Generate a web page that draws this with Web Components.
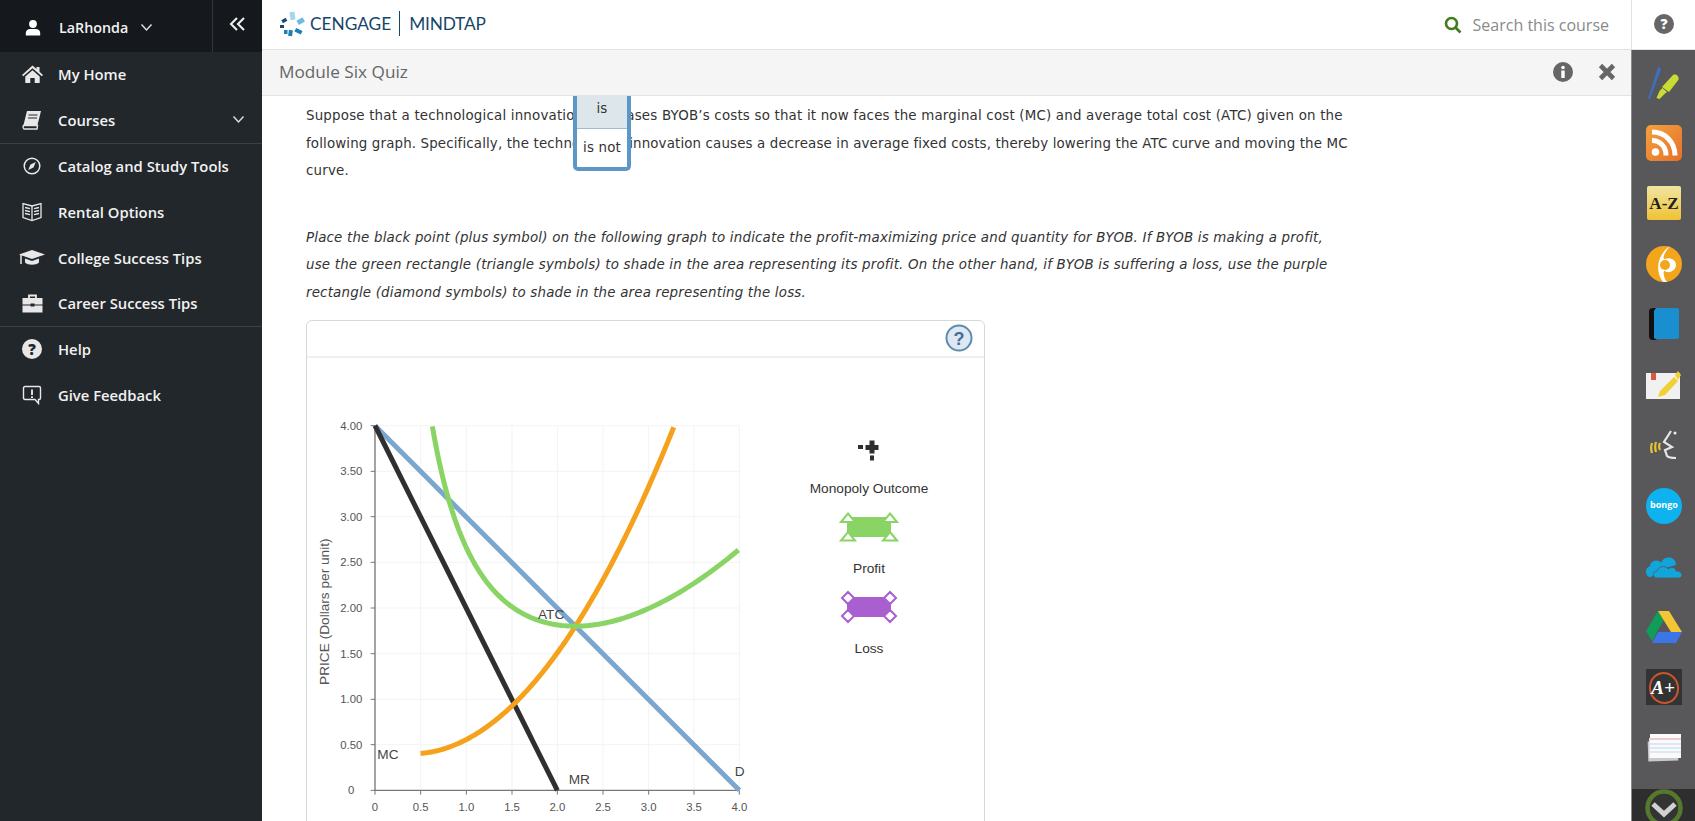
<!DOCTYPE html>
<html lang="en"><head><meta charset="utf-8"><title>Module Six Quiz</title>
<style>
html,body{margin:0;height:100%;overflow:hidden;background:#fff}
body{font-family:"Open Sans",sans-serif}
</style></head>
<body>
<template id="t-app"><style>
:host{display:grid;grid-template-columns:262px 1fr 64px;grid-template-rows:50px 1fr;width:1695px;height:821px;overflow:hidden}
.main{display:flex;flex-direction:column;min-height:0;overflow:hidden;grid-row:2}
</style>
<slot name="side"></slot><slot name="top"></slot><slot name="corner"></slot>
<div class="main"><slot name="title"></slot><slot name="content"></slot></div><slot name="rail"></slot></template>

<template id="t-side"><style>
:host{display:flex;flex-direction:column;grid-row:1/3;background:#22272c;color:#f2f2f2;font:600 14.800px "Open Sans",sans-serif;height:821px}
.head{display:flex;height:52px;background:#15181c;flex:none}
.who{flex:none;width:213px;box-sizing:border-box;display:flex;align-items:center;padding:3px 0 0 25px;border-right:1px solid #32363a;font-size:14.300px}
.who svg.u{margin-right:18px}
.who svg.c{margin-left:12px}
.col{flex:1;display:flex;align-items:center;justify-content:center;padding-bottom:5px}
</style>
<div class="head"><div class="who"><svg class="u" width="16" height="16" viewBox="0 0 16 16"><circle cx="8" cy="4" r="3.900" fill="#fff"/><path d="M.8 15.500v-2.600C.8 10.400 3 9 5 9h6c2 0 4.200 1.400 4.200 3.900v2.600z" fill="#fff"/></svg>LaRhonda<svg class="c" width="13" height="9" viewBox="0 0 13 9"><path d="M1.500 1.500 6.500 7l5-5.500" fill="none" stroke="#ddd" stroke-width="1.500"/></svg></div>
<div class="col"><svg width="17" height="14" viewBox="0 0 17 14" fill="none" stroke="#eee" stroke-width="2.100"><path d="M8 1 2 7l6 6M15 1 9 7l6 6"/></svg></div></div>
<slot></slot></template>

<template id="t-nav"><style>
:host{display:flex;align-items:center;height:45.750px;box-sizing:border-box;padding:0 17px 1px 19px;flex:none;color:#f2f2f2}
.i{width:26px;height:24px;display:flex;align-items:center;justify-content:center;margin-right:13px;flex:none}
.t{flex:1;white-space:nowrap}
:host([sep]){border-bottom:1px solid #3b4045;height:46px}
</style><div class="i"><slot name="icon"></slot></div><div class="t"><slot></slot></div><slot name="end"></slot></template>

<template id="t-top"><style>
:host{display:flex;align-items:center;height:50px;box-sizing:border-box;border-bottom:1px solid #e2e2e2;background:#fff;grid-column:2}
.logo{display:flex;align-items:center;margin-left:17px;color:#17466b;font:400 17.300px Lato,"Open Sans",sans-serif;padding-bottom:2px}
.bar{width:1px;height:25px;background:#17466b;margin:0 9px 0 8px}
.mt{letter-spacing:-.2px}
svg.m{margin-right:5px}
.s{margin-left:auto;display:flex;align-items:center;color:#8a8a8a;font:400 16px "Open Sans",sans-serif;padding-right:22px}
.s svg{margin-right:11px}
</style><div class="logo"><svg class="m" width="26" height="26" viewBox="0 0 26 26"><g fill="#6fbbe0"><rect x="11" y="1" width="5" height="8" transform="rotate(-8 13 5)" fill="#a4d6ef"/><rect x="18" y="8" width="7" height="5" transform="rotate(-30 21 10)"/></g><g fill="#1c7fb8"><rect x="16" y="18" width="7" height="4" transform="rotate(25 19 20)"/><rect x="9.500" y="19" width="4" height="6" transform="rotate(8 11 22)"/></g><g fill="#1c4b6e"><rect x="3" y="8" width="5" height="3.500" transform="rotate(-30 5 10)"/><rect x="1" y="14" width="4" height="3"/><rect x="5" y="19" width="3.500" height="4" fill="#1c7fb8"/></g></svg>CENGAGE<span class="bar"></span><span class="mt">MINDTAP</span></div>
<div class="s"><svg width="18" height="18" viewBox="0 0 18 18" fill="none" stroke="#3f7d1c" stroke-width="2.600"><circle cx="7.500" cy="7.500" r="5.500"/><path d="M11.500 11.500 16.500 16.500"/></svg><span>Search this course</span></div></template>

<template id="t-corner"><style>
:host{display:flex;align-items:center;justify-content:center;height:50px;box-sizing:border-box;border-left:1px solid #e2e2e2;border-bottom:1px solid #e2e2e2;background:#fff;padding-bottom:2px}
</style><svg width="20" height="20" viewBox="0 0 20 20"><circle cx="10" cy="10" r="10" fill="#666"/><text x="10" y="15" text-anchor="middle" font-family="Open Sans" font-weight="800" font-size="14" fill="#fff">?</text></svg></template>

<template id="t-title"><style>
:host{display:flex;align-items:center;height:46px;flex:none;box-sizing:border-box;background:#f5f5f5;border-bottom:1px solid #e3e3e3;color:#666;font:400 17.200px "Open Sans",sans-serif;padding:0 15px 2px 17px}
span{flex:1}
svg+svg{margin-left:25px}
</style><span><slot></slot></span>
<svg width="20" height="20" viewBox="0 0 20 20"><circle cx="10" cy="10" r="10" fill="#666"/><circle cx="10" cy="5.500" r="1.800" fill="#fff"/><rect x="8.300" y="8.500" width="3.400" height="7.500" fill="#fff"/></svg>
<svg width="18" height="18" viewBox="0 0 18 18"><path d="M2.500 2.500 15.500 15.500M15.500 2.500 2.500 15.500" stroke="#666" stroke-width="4.600"/></svg></template>

<template id="t-content"><style>
:host{display:block;position:relative;flex:1;min-height:0;overflow:hidden;padding:6px 0 0 44px;color:#333;font:13.400px/27.600px "DejaVu Sans",Verdana,sans-serif;letter-spacing:.19px;background:#fff}
.p{white-space:nowrap}
.e{font-style:italic;margin:39px 0 13px}
</style><div class="p"><slot name="a"></slot></div><div class="p e"><slot name="b"></slot></div><slot></slot></template>

<template id="t-drop"><style>
:host{position:absolute;left:311px;top:0;width:58px;box-sizing:border-box;border:4px solid #5d97c6;border-top:0;border-radius:0 0 5px 5px;background:#fff;text-align:center;font:13.400px/20px "DejaVu Sans",Verdana,sans-serif;color:#333}
div{height:32px;line-height:26px}
.on{background:#dde6ea;border-bottom:1px solid #9dbbd2}
.off{height:38px;line-height:38px}
</style><div class="on">is</div><div class="off">is not</div></template>

<template id="t-card"><style>
:host{display:block;width:679px;height:560px;box-sizing:border-box;border:1px solid #d8d8d8;border-radius:6px;letter-spacing:0}
.h{height:35px;border-bottom:2px solid #f0f0f0;display:flex;justify-content:flex-end;align-items:center;padding-right:11px}
.b{display:flex;align-items:flex-start}
</style><div class="h"><svg width="28" height="28" viewBox="0 0 28 28"><circle cx="14" cy="14" r="12.500" fill="#dde8f2" stroke="#5c8bb0" stroke-width="2"/><text x="14" y="20.500" text-anchor="middle" font-family="Liberation Sans" font-weight="700" font-size="18" fill="#3f6f9e">?</text></svg></div>
<div class="b"><slot></slot></div></template>

<template id="t-legend"><style>
:host{display:block;width:160px;margin:70px 0 0 29px;flex:none;font:13.700px/18px "Liberation Sans",Arial,sans-serif;color:#333;text-align:center}
</style><slot></slot></template>

<template id="t-leg"><style>
:host{display:flex;flex-direction:column;align-items:center;height:80px}
.i{height:40px;display:flex;align-items:center;justify-content:center}
.l{margin-top:12px}
</style><div class="i"><slot name="icon"></slot></div><div class="l"><slot></slot></div></template>

<template id="t-rail"><style>
:host{display:flex;flex-direction:column;background:#58585a;height:771px;position:relative;box-sizing:border-box;border-left:1px solid #8a8a8a;padding-top:2px;overflow:hidden}
.f{position:absolute;left:0;right:0;bottom:0;height:32px;background:#2e2e2e;display:flex;justify-content:center}
</style><slot></slot><div class="f"><svg width="38" height="32" viewBox="0 0 38 32"><circle cx="19" cy="19" r="16.500" fill="#333" stroke="#55782c" stroke-width="4.500"/><path d="M8 15 19 25 30 15" fill="none" stroke="#d0d0d0" stroke-width="5"/></svg></div></template>

<template id="t-ri"><style>
:host{display:flex;align-items:center;justify-content:center;height:60.500px;flex:none}
</style><slot></slot></template>

<script>
const def=(n,t)=>customElements.define(n,class extends HTMLElement{constructor(){super();this.attachShadow({mode:"open"}).append(document.getElementById(t).content.cloneNode(true))}});
[["mt-app","t-app"],["mt-side","t-side"],["mt-nav","t-nav"],["mt-top","t-top"],["mt-corner","t-corner"],["mt-title","t-title"],["mt-content","t-content"],["mt-drop","t-drop"],["mt-card","t-card"],["mt-legend","t-legend"],["mt-leg","t-leg"],["mt-rail","t-rail"],["mt-ri","t-ri"]].forEach(a=>def(...a));
</script>

<mt-app>
<mt-side slot="side">
<mt-nav><svg slot="icon" width="21" height="18" viewBox="0 0 21 18"><path d="M10.500 .5 14.500 4V2H17.500v4.700L21 10l-1.200 1.300-9.300-8-9.300 8L0 10zM3.300 11.500 10.500 5.300l7.200 6.200V18h-5v-5h-4.400v5h-5z" fill="#e8e8e8"/></svg>My Home</mt-nav>
<mt-nav sep><svg slot="icon" width="20" height="20" viewBox="0 0 20 20"><path d="M5 1h14l-3.500 14H1.500z" fill="#e8e8e8"/><path d="M1.500 15.500h14l-.5 3.500H2.500C1 19 .8 16.500 1.500 15.500z" fill="none" stroke="#e8e8e8" stroke-width="1.400"/><path d="M6.500 5h9M6 8h9" stroke="#22272c" stroke-width="1.200"/></svg>Courses<svg slot="end" width="13" height="9" viewBox="0 0 13 9"><path d="M1.500 1.500 6.500 7l5-5.500" fill="none" stroke="#ddd" stroke-width="1.500"/></svg></mt-nav>
<mt-nav><svg slot="icon" width="18" height="18" viewBox="0 0 18 18"><circle cx="9" cy="9" r="7.800" fill="none" stroke="#e8e8e8" stroke-width="1.500"/><path d="M12.800 5 10.500 10.500 5.200 13 7.500 7.500z" fill="#e8e8e8"/></svg>Catalog and Study Tools</mt-nav>
<mt-nav><svg slot="icon" width="20" height="20" viewBox="0 0 20 20" fill="none" stroke="#e8e8e8" stroke-width="1.300"><path d="M10 4 1 1.500v14L10 18.500l9-3v-14z"/><path d="M10 4v14M3 5.500l5 1.200M3 8.500l5 1.200M3 11.500l5 1.200M17 5.500l-5 1.200M17 8.500l-5 1.200M17 11.500l-5 1.200"/></svg>Rental Options</mt-nav>
<mt-nav><svg slot="icon" width="26" height="18" viewBox="0 0 26 18"><path d="M13 1 26 5.500 13 10 0 5.500z" fill="#e8e8e8"/><path d="M6 9.500v4c3 3 11 3 14 0v-4L13 12z" fill="#e8e8e8"/><path d="M2 6v9" stroke="#e8e8e8" stroke-width="1.500"/></svg>College Success Tips</mt-nav>
<mt-nav sep><svg slot="icon" width="21" height="19" viewBox="0 0 21 19"><path d="M7 4V1.500h7V4" fill="none" stroke="#e8e8e8" stroke-width="1.800"/><rect x=".5" y="4" width="20" height="6.500" fill="#e8e8e8"/><rect x=".5" y="11.500" width="20" height="7" fill="#e8e8e8"/><rect x="8.500" y="9.500" width="4" height="3" fill="#22272c"/></svg>Career Success Tips</mt-nav>
<mt-nav><svg slot="icon" width="20" height="20" viewBox="0 0 20 20"><circle cx="10" cy="10" r="10" fill="#e8e8e8"/><text x="10" y="15.500" text-anchor="middle" font-family="Open Sans" font-weight="800" font-size="15" fill="#22272c">?</text></svg>Help</mt-nav>
<mt-nav><svg slot="icon" width="20" height="20" viewBox="0 0 20 20" fill="none" stroke="#e8e8e8" stroke-width="1.400"><path d="M3 1.500h14c1 0 1.500.5 1.500 1.500v10c0 1-.5 1.500-1.500 1.500h-.5v4l-3.500-4H3c-1 0-1.500-.5-1.500-1.500V3c0-1 .5-1.500 1.500-1.500z"/><path d="M10 4.500v5.500M10 11.200v1.800" stroke-width="1.900"/></svg>Give Feedback</mt-nav>
</mt-side>
<mt-top slot="top"></mt-top>
<mt-corner slot="corner"></mt-corner>
<mt-title slot="title">Module Six Quiz</mt-title>
<mt-content slot="content">
<span slot="a">Suppose that a technological innovation decreases BYOB’s costs so that it now faces the marginal cost (MC) and average total cost (ATC) given on the<br><span style="letter-spacing:.14px">following graph. Specifically, the technological innovation causes a decrease in average fixed costs, thereby lowering the ATC curve and moving the MC</span><br>curve.</span>
<span slot="b">Place the black point (plus symbol) on the following graph to indicate the profit-maximizing price and quantity for BYOB. If BYOB is making a profit,<br>use the green rectangle (triangle symbols) to shade in the area representing its profit. On the other hand, if BYOB is suffering a loss, use the purple<br>rectangle (diamond symbols) to shade in the area representing the loss.</span>
<mt-card>
<svg width="453" height="470" viewBox="21 144 1359 1410" font-family="Liberation Sans,Arial,sans-serif" style="flex:none;display:block">
<g stroke="#f0f0f0" stroke-width="2.500">
<path d="M362 347V1441M499 347V1441M636 347V1441M772 347V1441M909 347V1441M1046 347V1441M1182 347V1441M1318 347V1441M225 347H1318M225 484H1318M225 620H1318M225 757H1318M225 894H1318M225 1031H1318M225 1168H1318M225 1304H1318"/></g>
<path d="M225 347V1441H1318" fill="none" stroke="#777" stroke-width="4"/>
<path d="M212 347h13M212 484h13M212 620h13M212 757h13M212 894h13M212 1031h13M212 1168h13M212 1304h13M212 1441h13M225 1441v13M362 1441v13M499 1441v13M636 1441v13M772 1441v13M909 1441v13M1046 1441v13M1182 1441v13M1318 1441v13" stroke="#777" stroke-width="3"/>
<g fill="#555" font-size="34" text-anchor="end">
<text x="187" y="359">4.00</text><text x="187" y="496">3.50</text><text x="187" y="632">3.00</text><text x="187" y="769">2.50</text><text x="187" y="906">2.00</text><text x="187" y="1043">1.50</text><text x="187" y="1180">1.00</text><text x="187" y="1316">0.50</text><text x="163" y="1453">0</text></g>
<g fill="#555" font-size="34" text-anchor="middle">
<text x="225" y="1503">0</text><text x="362" y="1503">0.5</text><text x="499" y="1503">1.0</text><text x="636" y="1503">1.5</text><text x="772" y="1503">2.0</text><text x="909" y="1503">2.5</text><text x="1046" y="1503">3.0</text><text x="1182" y="1503">3.5</text><text x="1318" y="1503">4.0</text></g>
<text transform="translate(86 905) rotate(-90)" text-anchor="middle" font-size="41" fill="#555">PRICE (Dollars per unit)</text>
<path d="M225 347 1318 1441" stroke="#7ba6cd" stroke-width="15" fill="none"/>
<path d="M225 347 772 1441" stroke="#2f2f2f" stroke-width="15" fill="none"/>
<path id="mc" stroke="#f5a11c" stroke-width="15" fill="none" stroke-linejoin="round"/>
<path id="atc" stroke="#8ad465" stroke-width="15" fill="none" stroke-linejoin="round"/>
<g fill="#444" font-size="41"><text x="714" y="928">ATC</text><text x="232" y="1346">MC</text><text x="806" y="1421">MR</text><text x="1304" y="1398">D</text></g>
</svg>
<mt-legend>
<mt-leg><svg slot="icon" style="margin-top:6px" width="24" height="21" viewBox="0 0 24 21" fill="#2f2f2f"><rect x="1" y="5" width="5" height="4"/><path d="M12.500 .5h5V5h4v5h-4v3.500h-5V10h-4V5h4z"/><rect x="13" y="15.500" width="4" height="5"/></svg>Monopoly Outcome</mt-leg>
<mt-leg><svg slot="icon" style="margin-bottom:2px" width="60" height="30" viewBox="0 0 60 30"><rect x="8" y="5" width="44" height="20" fill="#8ad465"/><g fill="#fff" stroke="#8ad465" stroke-width="2"><path d="M9 1.500 16 10H2zM51 1.500 58 10H44zM9 20 16 28.500H2zM51 20 58 28.500H44z"/></g></svg>Profit</mt-leg>
<mt-leg><svg slot="icon" style="margin-bottom:2px" width="60" height="34" viewBox="0 0 60 34"><rect x="8" y="7" width="44" height="20" fill="#a95fd0"/><g fill="#fff" stroke="#a95fd0" stroke-width="2"><path d="M9 2 15 8 9 14 3 8zM51 2 57 8 51 14 45 8zM9 20 15 26 9 32 3 26zM51 20 57 26 51 32 45 26z"/></g></svg>Loss</mt-leg>
</mt-legend>
</mt-card>
<mt-drop></mt-drop>
</mt-content>
<mt-rail slot="rail">
<mt-ri><svg width="31" height="33" viewBox="0 0 31 33"><path d="M11 0 13 3.500 2 33H0L9 4z" fill="#3c6fc0"/><path d="M25 9c1.500-1 4-.5 5 1.500s1 3-.5 4.500L21 26l-7-5zM14.500 22 19 26l-2.500 2-5 5-3-1 3-7z" fill="#c9dc32"/></svg></mt-ri>
<mt-ri><svg width="36" height="36" viewBox="0 0 36 36"><defs><linearGradient id="g1" x2="1" y2="1"><stop offset="0" stop-color="#f4a23d"/><stop offset="1" stop-color="#e5702a"/></linearGradient></defs><rect width="36" height="36" rx="5" fill="url(#g1)"/><circle cx="9.500" cy="27" r="3.800" fill="#fff"/><path d="M6 15.500c8 0 14 6 14 15M6 7c13 0 23 10 23 23.500" fill="none" stroke="#fff" stroke-width="5"/></svg></mt-ri>
<mt-ri><svg width="34" height="34" viewBox="0 0 34 34"><defs><linearGradient id="g2" x2="0" y2="1"><stop offset="0" stop-color="#efe6a2"/><stop offset="1" stop-color="#f0c233"/></linearGradient></defs><rect width="34" height="34" rx="2" fill="url(#g2)"/><text x="17" y="23" text-anchor="middle" font-family="Liberation Serif" font-weight="700" font-size="17" fill="#222">A-Z</text></svg></mt-ri>
<mt-ri><svg width="36" height="36" viewBox="0 0 36 36"><circle cx="18" cy="18" r="18" fill="#f3a51c"/><path d="M17 36C8 24 12 8 24 0c-8 10-7 13-5 13 4-2 11 0 11 6s-8 9-11 6c-2-1-2 6 2 11z" fill="#fff"/><circle cx="19" cy="19" r="5" fill="#f3a51c"/></svg></mt-ri>
<mt-ri><svg width="32" height="36" viewBox="0 0 32 36"><rect x="3" y="2" width="28" height="31" rx="2" fill="#1a8fcf"/><path d="M1 5c0-2 2-3 4-3h3L6 5v27l3 2H5c-2 0-4-1-4-3z" fill="#111"/></svg></mt-ri>
<mt-ri><svg width="36" height="30" viewBox="0 0 36 30"><rect y="3" width="34" height="26" fill="#f1f1f1"/><rect x="5" y="3" width="5" height="7" fill="#d65a41"/><path d="M14 21 28 7l4 4-13 14-7 2z" fill="#f2cf33"/><path d="M29 5l3-4 3 4-3 5z" fill="#f2cf33"/></svg></mt-ri>
<mt-ri><svg width="28" height="32" viewBox="0 0 28 32" fill="none"><path d="M2 14c-1 3-1 7 0 10M6 13c-1 3-1 7 0 10M10 14c-1 2-1 5 0 7" stroke="#e8c233" stroke-width="2.200"/><path d="M21 2 14 13l8 5-7 3 2 6c2 2 6 2 9 2" stroke="#e6e6e6" stroke-width="2.200"/><circle cx="25" cy="4" r="1.500" fill="#eee"/></svg></mt-ri>
<mt-ri><svg width="36" height="36" viewBox="0 0 36 36"><circle cx="18" cy="18" r="18" fill="#0db2ee"/><text x="18" y="20" text-anchor="middle" font-family="Open Sans" font-weight="700" font-size="9" fill="#fff">bongo</text></svg></mt-ri>
<mt-ri><svg width="38" height="24" viewBox="0 0 38 24"><path d="M6 23C0 23-1 14 5 12 6 6 14 5 16 9 19 1 31 2 31 11l-14 4z" fill="#12a5dc"/><path d="M12 24c-5 0-5-7 0-7 1-5 9-6 11-2 4-3 8-1 8 2 7 0 8 7 2 7z" fill="#12a5dc" stroke="#58585a" stroke-width=".8"/></svg></mt-ri>
<mt-ri><svg width="36" height="32" viewBox="0 0 36 32"><path d="M12 0h11L12 19 6 30 0 20z" fill="#0f9d58"/><path d="M12 0h11l13 21H25z" fill="#f4c534"/><path d="M12 21h24l-6 11H6z" fill="#3b76e8"/></svg></mt-ri>
<mt-ri><svg width="36" height="36" viewBox="0 0 36 36"><rect width="36" height="36" fill="#333"/><ellipse cx="18" cy="19" rx="14" ry="15" transform="rotate(-15 18 19)" fill="none" stroke="#c8552f" stroke-width="2"/><text x="17" y="25" text-anchor="middle" font-family="Liberation Serif" font-style="italic" font-weight="700" font-size="19" fill="#fff">A+</text></svg></mt-ri>
<mt-ri><svg width="34" height="30" viewBox="0 0 34 30"><rect x="1" y="8" width="30" height="20" transform="rotate(-2 16 18)" fill="#c9c9c9"/><rect x="2" y="5" width="31" height="20" fill="#e0e0e0"/><rect x="3" y="1" width="31" height="24" fill="#fafafa"/><path d="M3 6h31" stroke="#e69a9a"/><path d="M3 11h31M3 15h31M3 19h31" stroke="#bcd4ea"/></svg></mt-ri>
</mt-rail>
</mt-app>
<script>
const curve=(id,f,a,b)=>{let d="";for(let q=a;q<=b+1e-9;q+=.02){d+=(d?"L":"M")+(225+273.25*q).toFixed(1)+" "+(1441-273.5*f(q)).toFixed(1)}document.getElementById(id).setAttribute("d",d)};
curve("mc",q=>.4+.432*(q-.4)*(q-.4),.5,3.28);
curve("atc",q=>2.37/q+.111*q*q+.186+(q>2.2?.09*Math.pow((q-2.2)/1.8,2):0),.63,4);
</script>
</body></html>
